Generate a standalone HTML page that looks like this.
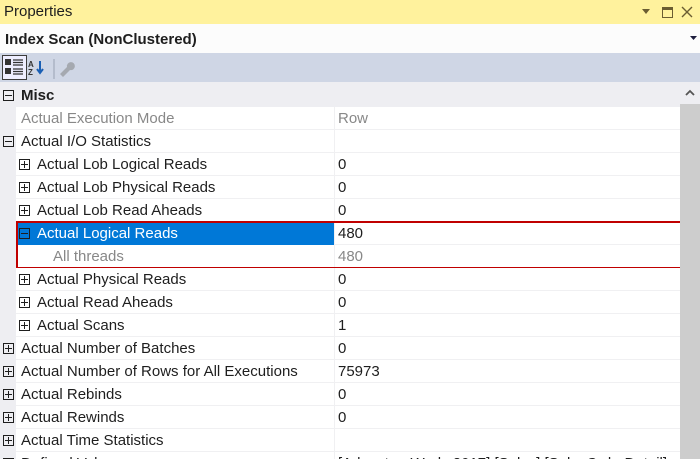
<!DOCTYPE html>
<html><head><style>
*{margin:0;padding:0;box-sizing:border-box}
html,body{width:700px;height:459px;overflow:hidden}
body{font-family:"Liberation Sans",sans-serif;font-size:15px;background:#eeeef2;position:relative}
.t{position:absolute;left:0;top:0;width:700px;height:24px;background:#fff29d;color:#1e1e1e}
.t span{position:absolute;left:4px;top:3px;font-size:15px}
.h{position:absolute;left:0;top:24px;width:700px;height:29px;background:#fcfcfc;font-weight:bold;color:#1e1e1e}
.h span{position:absolute;left:5px;top:7px}
.tb{position:absolute;left:0;top:53px;width:700px;height:29px;background:#cfd6e5}
.row{position:absolute;left:16px;width:664px;height:23px;background:#fff;border-bottom:1px solid #f0f0f2}
.row .l{position:absolute;top:3px;white-space:nowrap;color:#1e1e1e}
.row .v{position:absolute;left:322px;top:3px;color:#1e1e1e;white-space:nowrap}
.row .sep{position:absolute;left:318px;top:0;width:1px;height:23px;background:#f0f0f2}
.gray{color:#888!important}
.ex{position:absolute;width:11px;height:11px;border:1px solid #1e1e1e;top:6px}
.ex:before{content:"";position:absolute;left:1px;top:4px;width:7px;height:1px;background:#1e1e1e}
.ex.p:after{content:"";position:absolute;left:4px;top:1px;width:1px;height:7px;background:#1e1e1e}
.sb{position:absolute;left:680px;top:83px;width:20px;height:376px;background:#cdcdcd}
.sb .u{position:absolute;left:0;top:0;width:20px;height:21px;background:#eeeef2}
</style></head><body>
<div class="t"><span>Properties</span>
<svg style="position:absolute;left:640px;top:5px" width="58" height="14"><path d="M2 4h8l-4 5z" fill="#6b5d32"/><rect x="22.5" y="2.5" width="10" height="10" fill="none" stroke="#6b5d32"/><rect x="22" y="2" width="11" height="3" fill="#6b5d32"/><path d="M42 2l10 10M52 2l-10 10" stroke="#6b5d32" stroke-width="1.4"/></svg></div>
<div class="h"><span>Index Scan (NonClustered)</span>
<svg style="position:absolute;left:690px;top:12px" width="8" height="5"><path d="M0 0h7l-3.5 4z" fill="#1e1e3e"/></svg></div>
<div class="tb">
<div style="position:absolute;left:2px;top:2px;width:25px;height:25px;border:1px solid #3c3c3c;background:#eef"></div>
<svg style="position:absolute;left:5px;top:6px" width="80" height="20"><rect x="0" y="0" width="6" height="6" fill="#333"/><rect x="0" y="9" width="6" height="6" fill="#333"/><path d="M8 1h10M8 3.5h10M8 6h10M8 10h10M8 12.5h10M8 15h10" stroke="#333" stroke-width="1.2"/>
<text x="23" y="8" font-size="8" font-weight="bold" fill="#333" font-family="Liberation Sans">A</text><text x="23" y="16" font-size="8" font-weight="bold" fill="#333" font-family="Liberation Sans">Z</text><path d="M35 2v11M32 10l3 4 3-4" stroke="#1a5fb4" stroke-width="2" fill="none"/>
<path d="M49 -2v22" stroke="#9aa3b4"/><path d="M55 15l7-7a4 4 0 1 1 3 3l-7 7z" fill="#a5a9b0"/></svg></div>
<div style="position:absolute;left:0;top:84px;width:680px;height:23px;background:#eeeef2"><div class="ex" style="left:3px"></div><span style="position:absolute;left:21px;top:3px;font-weight:bold;color:#1e1e1e">Misc</span></div>
<div class="row" style="top:107px"><span class="l gray" style="left:5px">Actual Execution Mode</span><div class="sep"></div><span class="v gray">Row</span></div>
<div class="row" style="top:130px"><span class="l" style="left:5px">Actual I/O Statistics</span><div class="sep"></div></div>
<div class="ex" style="left:3px;top:136px"></div>
<div class="row" style="top:153px"><div class="ex p" style="left:3px"></div><span class="l" style="left:21px">Actual Lob Logical Reads</span><div class="sep"></div><span class="v">0</span></div>
<div class="row" style="top:176px"><div class="ex p" style="left:3px"></div><span class="l" style="left:21px">Actual Lob Physical Reads</span><div class="sep"></div><span class="v">0</span></div>
<div class="row" style="top:199px"><div class="ex p" style="left:3px"></div><span class="l" style="left:21px">Actual Lob Read Aheads</span><div class="sep"></div><span class="v">0</span></div>
<div class="row" style="top:222px"><div style="position:absolute;left:0;top:0;width:318px;height:23px;background:#0078d7"></div><div class="ex" style="left:3px"></div><span class="l" style="left:21px;color:#fff">Actual Logical Reads</span><div class="sep"></div><span class="v">480</span></div>
<div class="row" style="top:245px"><span class="l gray" style="left:37px">All threads</span><div class="sep"></div><span class="v gray">480</span></div>
<div style="position:absolute;left:16px;top:221px;width:667px;height:48px;border:2px solid #c00000"></div>
<div class="row" style="top:268px"><div class="ex p" style="left:3px"></div><span class="l" style="left:21px">Actual Physical Reads</span><div class="sep"></div><span class="v">0</span></div>
<div class="row" style="top:291px"><div class="ex p" style="left:3px"></div><span class="l" style="left:21px">Actual Read Aheads</span><div class="sep"></div><span class="v">0</span></div>
<div class="row" style="top:314px"><div class="ex p" style="left:3px"></div><span class="l" style="left:21px">Actual Scans</span><div class="sep"></div><span class="v">1</span></div>
<div class="row" style="top:337px"><span class="l" style="left:5px">Actual Number of Batches</span><div class="sep"></div><span class="v">0</span></div>
<div class="ex p" style="left:3px;top:343px"></div>
<div class="row" style="top:360px"><span class="l" style="left:5px">Actual Number of Rows for All Executions</span><div class="sep"></div><span class="v">75973</span></div>
<div class="ex p" style="left:3px;top:366px"></div>
<div class="row" style="top:383px"><span class="l" style="left:5px">Actual Rebinds</span><div class="sep"></div><span class="v">0</span></div>
<div class="ex p" style="left:3px;top:389px"></div>
<div class="row" style="top:406px"><span class="l" style="left:5px">Actual Rewinds</span><div class="sep"></div><span class="v">0</span></div>
<div class="ex p" style="left:3px;top:412px"></div>
<div class="row" style="top:429px"><span class="l" style="left:5px">Actual Time Statistics</span><div class="sep"></div></div>
<div class="ex p" style="left:3px;top:435px"></div>
<div class="row" style="top:452px"><span class="l" style="left:5px">Defined Values</span><div class="sep"></div><span class="v">[AdventureWorks2017].[Sales].[SalesOrderDetail]</span></div>
<div class="ex p" style="left:3px;top:458px"></div>
<div class="sb"><div class="u"><svg width="20" height="21"><path d="M6 12l4-4 4 4" stroke="#555" stroke-width="1.8" fill="none"/></svg></div></div>
</body></html>
